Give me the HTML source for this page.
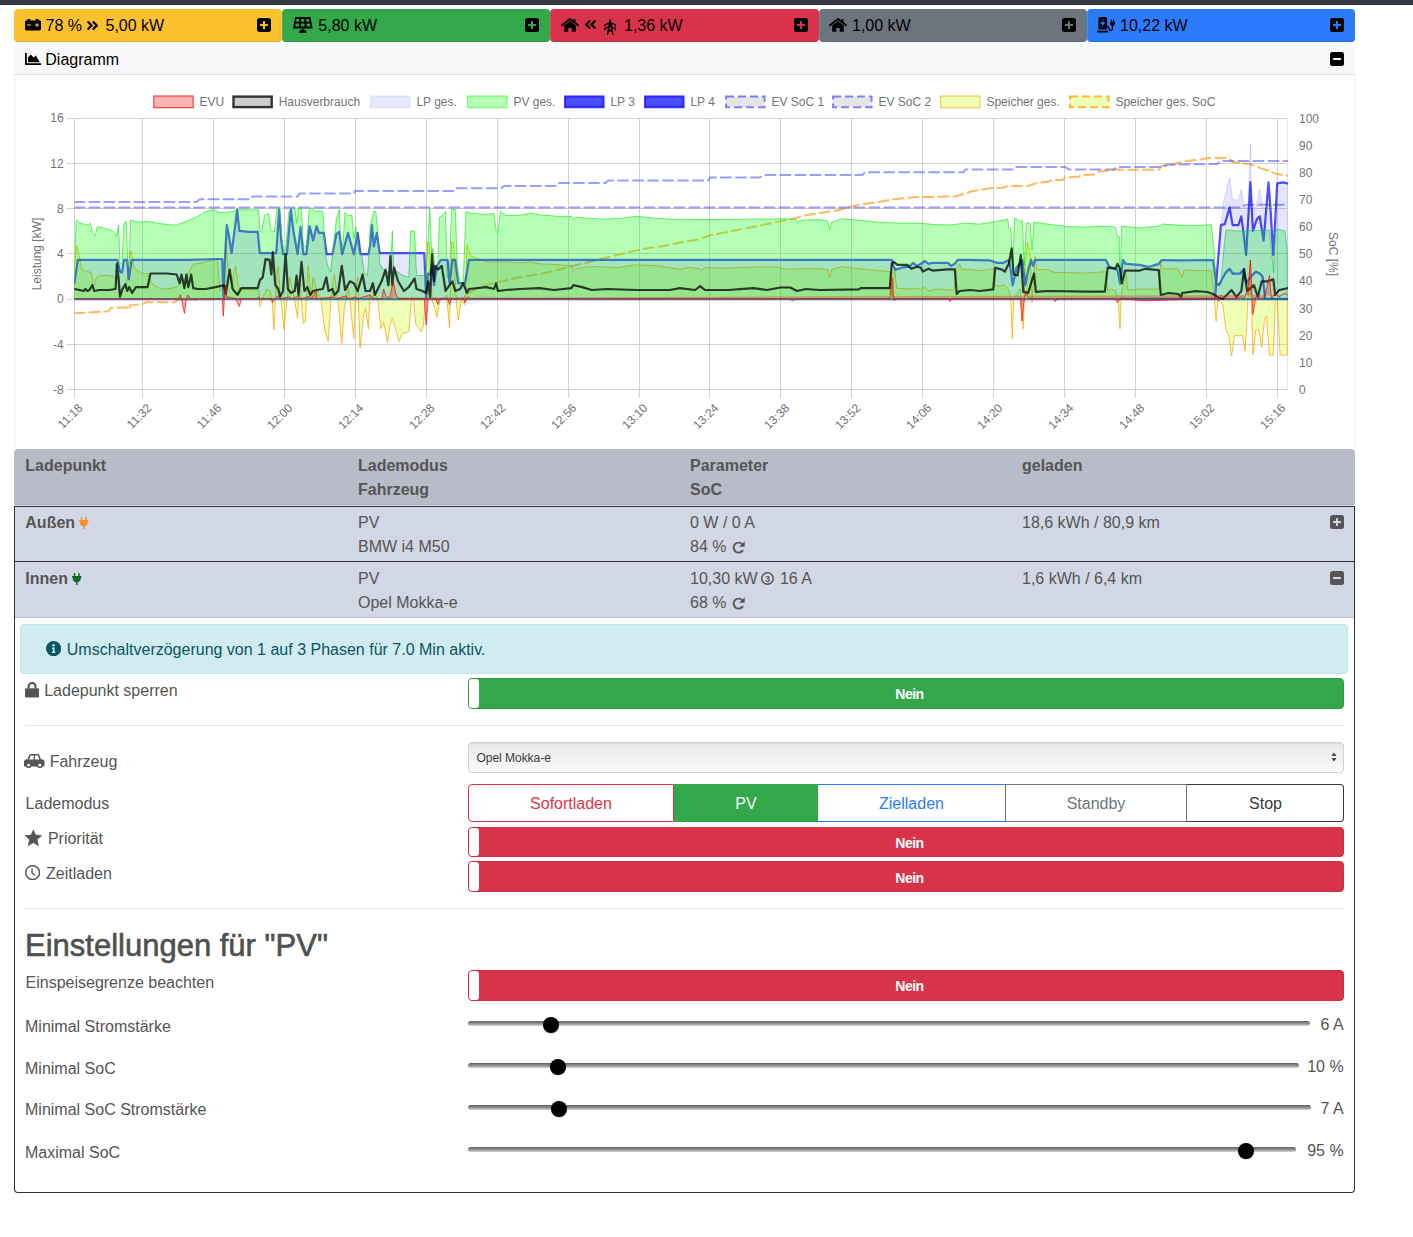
<!DOCTYPE html>
<html><head><meta charset="utf-8">
<style>
*{box-sizing:border-box;margin:0;padding:0}
html,body{width:1413px;height:1237px;overflow:hidden;background:#fff;font-family:"Liberation Sans",sans-serif;font-size:16px;color:#555}
.a{position:absolute}
.t{position:absolute;white-space:pre;line-height:1}
</style></head><body>
<div class="a" style="left:0px;top:0px;width:1413px;height:5px;background:#363a41"></div>
<div class="a" style="left:0px;top:4px;width:1413px;height:1px;background:#2c3036"></div>
<div class="a" style="left:14px;top:9px;width:268px;height:33px;background:#fbc12f;border-radius:4px;box-shadow:inset 0 -1px 0 rgba(0,0,0,0.1),inset 1px 0 0 rgba(255,255,255,0.12)"></div>
<svg class="a" style="left:257px;top:18px;" width="14" height="14" viewBox="0 0 14 14"><rect x="0" y="0" width="14" height="14" rx="2.5" fill="#000"/><rect x="3" y="6" width="8" height="2" rx="0.5" fill="#fbc12f"/><rect x="6" y="3" width="2" height="8" rx="0.5" fill="#fbc12f"/></svg>
<div class="a" style="left:282px;top:9px;width:268px;height:33px;background:#33a84a;border-radius:4px;box-shadow:inset 0 -1px 0 rgba(0,0,0,0.1),inset 1px 0 0 rgba(255,255,255,0.12)"></div>
<svg class="a" style="left:525px;top:18px;" width="14" height="14" viewBox="0 0 14 14"><rect x="0" y="0" width="14" height="14" rx="2.5" fill="#000"/><rect x="3" y="6" width="8" height="2" rx="0.5" fill="#33a84a"/><rect x="6" y="3" width="2" height="8" rx="0.5" fill="#33a84a"/></svg>
<div class="a" style="left:550px;top:9px;width:269px;height:33px;background:#d8334a;border-radius:4px;box-shadow:inset 0 -1px 0 rgba(0,0,0,0.1),inset 1px 0 0 rgba(255,255,255,0.12)"></div>
<svg class="a" style="left:794px;top:18px;" width="14" height="14" viewBox="0 0 14 14"><rect x="0" y="0" width="14" height="14" rx="2.5" fill="#000"/><rect x="3" y="6" width="8" height="2" rx="0.5" fill="#d8334a"/><rect x="6" y="3" width="2" height="8" rx="0.5" fill="#d8334a"/></svg>
<div class="a" style="left:819px;top:9px;width:268px;height:33px;background:#6c757d;border-radius:4px;box-shadow:inset 0 -1px 0 rgba(0,0,0,0.1),inset 1px 0 0 rgba(255,255,255,0.12)"></div>
<svg class="a" style="left:1062px;top:18px;" width="14" height="14" viewBox="0 0 14 14"><rect x="0" y="0" width="14" height="14" rx="2.5" fill="#000"/><rect x="3" y="6" width="8" height="2" rx="0.5" fill="#6c757d"/><rect x="6" y="3" width="2" height="8" rx="0.5" fill="#6c757d"/></svg>
<div class="a" style="left:1087px;top:9px;width:268px;height:33px;background:#2b7bfc;border-radius:4px;box-shadow:inset 0 -1px 0 rgba(0,0,0,0.1),inset 1px 0 0 rgba(255,255,255,0.12)"></div>
<svg class="a" style="left:1330px;top:18px;" width="14" height="14" viewBox="0 0 14 14"><rect x="0" y="0" width="14" height="14" rx="2.5" fill="#000"/><rect x="3" y="6" width="8" height="2" rx="0.5" fill="#2b7bfc"/><rect x="6" y="3" width="2" height="8" rx="0.5" fill="#2b7bfc"/></svg>
<svg class="a" style="left:24.5px;top:19.3px;" width="16" height="11.5" viewBox="0 0 16 11.5"><path d="M2.3 0h3v1.4h5.4V0h3v1.4h0.9A1.4 1.4 0 0 1 16 2.8v7.3a1.4 1.4 0 0 1-1.4 1.4H1.4A1.4 1.4 0 0 1 0 10.1V2.8a1.4 1.4 0 0 1 1.4-1.4h0.9z" fill="#000"/><rect x="2.2" y="5.4" width="3.6" height="1.2" fill="#fbc12f"/><rect x="10.2" y="5.4" width="3.6" height="1.2" fill="#fbc12f"/><rect x="11.4" y="4.2" width="1.2" height="3.6" fill="#fbc12f"/></svg>
<span class="t" style="left:45.5px;top:17.56px;font-size:16px;color:#000;">78 %</span>
<svg class="a" style="left:87px;top:20.6px;" width="12" height="9" viewBox="0 0 12 9"><path d="M1.4 1.2 L4.6 4.5 L1.4 7.8 M6.6 1.2 L9.8 4.5 L6.6 7.8" fill="none" stroke="#000" stroke-width="2.3" stroke-linecap="round" stroke-linejoin="round"/></svg>
<span class="t" style="left:105.5px;top:17.56px;font-size:16px;color:#000;">5,00 kW</span>
<svg class="a" style="left:293.1px;top:17px;" width="19.6" height="16" viewBox="0 0 19.6 16"><path d="M2.2 0 H17.4 L19.6 11.4 H0Z" fill="#000"/><path d="M3.5 1.9 H6.4 L6.2 4.8 H3Z M8.3 1.9 H11.3 L11.4 4.8 H8.2Z M13.2 1.9 H16.1 L16.6 4.8 H13.4Z M2.7 6.5 H6.1 L5.9 9.6 H2.2Z M8.1 6.5 H11.5 L11.6 9.6 H8Z M13.5 6.5 H16.9 L17.4 9.6 H13.7Z" fill="#33a84a"/><path d="M8.4 12.2 H11.2 L11.6 13.5 H13.3 V16 H6.3 V13.5 H8Z" fill="#000"/></svg>
<span class="t" style="left:318.3px;top:17.56px;font-size:16px;color:#000;">5,80 kW</span>
<svg class="a" style="left:561px;top:18px;" width="18" height="14" viewBox="0 0 18 14"><path d="M1 7.2 L9 1 L17 7.2" fill="none" stroke="#000" stroke-width="1.9" stroke-linecap="round" stroke-linejoin="round"/><rect x="12.6" y="1" width="1.8" height="3.5" fill="#000"/><path d="M3.2 7.4 L9 3 L14.8 7.4 V13.8 H10.7 V10 H7.3 V13.8 H3.2Z" fill="#000"/></svg>
<svg class="a" style="left:584px;top:20.3px;" width="12" height="9" viewBox="0 0 12 9"><path d="M10.6 1.2 L7.4 4.5 L10.6 7.8 M5.4 1.2 L2.2 4.5 L5.4 7.8" fill="none" stroke="#000" stroke-width="2.3" stroke-linecap="round" stroke-linejoin="round"/></svg>
<svg class="a" style="left:603.8px;top:18.9px;" width="12.4" height="16.6" viewBox="0 0 12.4 16.6"><g fill="none" stroke="#000" stroke-width="1.3" stroke-linecap="round"><path d="M6.2 0.5 L3.5 16.2 M6.2 0.5 L9 16.2 M0.8 6 Q6.2 2.2 11.6 6 M0.8 9.6 Q6.2 6 11.6 9.6 M4.3 4.5 L8 7.5 M8 4.5 L4.3 7.5 M4 10 L8.5 13 M8.5 10 L3.8 13"/></g><path d="M0.3 5.2 L1.8 7.8 L0.3 7.8Z M12.1 5.2 L10.6 7.8 L12.1 7.8Z M0.3 8.8 L1.8 11.5 L0.3 11.5Z M12.1 8.8 L10.6 11.5 L12.1 11.5Z" fill="#000"/></svg>
<span class="t" style="left:624px;top:17.56px;font-size:16px;color:#000;">1,36 kW</span>
<svg class="a" style="left:829px;top:18px;" width="18" height="14" viewBox="0 0 18 14"><path d="M1 7.2 L9 1 L17 7.2" fill="none" stroke="#000" stroke-width="1.9" stroke-linecap="round" stroke-linejoin="round"/><rect x="12.6" y="1" width="1.8" height="3.5" fill="#000"/><path d="M3.2 7.4 L9 3 L14.8 7.4 V13.8 H10.7 V10 H7.3 V13.8 H3.2Z" fill="#000"/></svg>
<span class="t" style="left:852px;top:17.56px;font-size:16px;color:#000;">1,00 kW</span>
<svg class="a" style="left:1097px;top:17px;" width="18" height="16" viewBox="0 0 18 16"><path d="M1.4 1.5 A1.5 1.5 0 0 1 2.9 0 H8.6 A1.5 1.5 0 0 1 10.1 1.5 V12.6 H1.4Z" fill="#000"/><rect x="0" y="13.8" width="11" height="1.6" rx="0.4" fill="#000"/><path d="M7 1.8 L3.2 7.1 H5.6 L4.3 11 L8.3 5.3 H5.9Z" fill="#2b7bfc"/><path d="M10.1 9.5 Q12 9.6 12.1 11.4 Q12.3 13.8 13.9 13.6 Q15.6 13.4 15.5 10.6 V8.6" fill="none" stroke="#000" stroke-width="1.3"/><path d="M13.2 4.8 H17.8 V6.6 Q17.8 9.2 15.5 9.2 Q13.2 9.2 13.2 6.6Z" fill="#000"/><rect x="13.9" y="2.5" width="1.1" height="2.6" fill="#000"/><rect x="16" y="2.5" width="1.1" height="2.6" fill="#000"/></svg>
<span class="t" style="left:1120px;top:17.56px;font-size:16px;color:#000;">10,22 kW</span>
<div class="a" style="left:14px;top:42px;width:1341px;height:406px;background:#fff;border-left:1px solid #f0f1f3;border-right:1px solid #f0f1f3"></div>
<div class="a" style="left:14px;top:42px;width:1341px;height:32px;background:#f7f8fa"></div>
<div class="a" style="left:14px;top:74px;width:1341px;height:1px;background:#dcdee2"></div>
<svg class="a" style="left:24.5px;top:53px;" width="16" height="12" viewBox="0 0 16 12"><path d="M0 0 H1.8 V10.2 H16 V12 H0Z" fill="#000"/><path d="M3 9.2 V4.6 L5.8 1.4 L8.6 4.6 L10.8 2.6 L14.8 9.2Z" fill="#000"/></svg>
<span class="t" style="left:45.3px;top:52.36px;font-size:16px;color:#000;">Diagramm</span>
<svg class="a" style="left:1330px;top:52px;" width="14" height="14" viewBox="0 0 14 14"><rect x="0" y="0" width="14" height="14" rx="2.5" fill="#000"/><rect x="3" y="6" width="8" height="2" rx="0.5" fill="#f7f8fa"/></svg>
<svg class="a" style="left:0;top:0" width="1413" height="450" viewBox="0 0 1413 450"><path d="M74.5 118.1 V397.6 M142.5 118.1 V397.6 M213.5 118.1 V397.6 M284.5 118.1 V397.6 M355.5 118.1 V397.6 M426.5 118.1 V397.6 M497.5 118.1 V397.6 M568.5 118.1 V397.6 M639.5 118.1 V397.6 M709.5 118.1 V397.6 M780.5 118.1 V397.6 M851.5 118.1 V397.6 M922.5 118.1 V397.6 M993.5 118.1 V397.6 M1064.5 118.1 V397.6 M1135.5 118.1 V397.6 M1206.5 118.1 V397.6 M1277.5 118.1 V397.6 M66.6 118.5 H1288 M66.6 163.5 H1288 M66.6 208.5 H1288 M66.6 253.5 H1288 M66.6 299.5 H1288 M66.6 344.5 H1288 M66.6 389.5 H1288" stroke="#d2d2d2" stroke-width="1" fill="none"/><path d="M1287.5 118 V390" stroke="#e6e6e6" stroke-width="1"/><g font-family="Liberation Sans" font-size="12" fill="#747474"><text x="63.6" y="122.3" text-anchor="end">16</text><text x="63.6" y="167.6" text-anchor="end">12</text><text x="63.6" y="212.8" text-anchor="end">8</text><text x="63.6" y="258.1" text-anchor="end">4</text><text x="63.6" y="303.4" text-anchor="end">0</text><text x="63.6" y="348.7" text-anchor="end">-4</text><text x="63.6" y="393.9" text-anchor="end">-8</text><text x="1299" y="122.5">100</text><text x="1299" y="149.6">90</text><text x="1299" y="176.8">80</text><text x="1299" y="203.9">70</text><text x="1299" y="231.1">60</text><text x="1299" y="258.2">50</text><text x="1299" y="285.4">40</text><text x="1299" y="312.5">30</text><text x="1299" y="339.7">20</text><text x="1299" y="366.8">10</text><text x="1299" y="394.0">0</text><text transform="translate(80.5 406) rotate(-45)" text-anchor="end" y="4">11:18</text><text transform="translate(149.5 406) rotate(-45)" text-anchor="end" y="4">11:32</text><text transform="translate(219.5 406) rotate(-45)" text-anchor="end" y="4">11:46</text><text transform="translate(290.5 406) rotate(-45)" text-anchor="end" y="4">12:00</text><text transform="translate(361.5 406) rotate(-45)" text-anchor="end" y="4">12:14</text><text transform="translate(432.5 406) rotate(-45)" text-anchor="end" y="4">12:28</text><text transform="translate(503.5 406) rotate(-45)" text-anchor="end" y="4">12:42</text><text transform="translate(574.5 406) rotate(-45)" text-anchor="end" y="4">12:56</text><text transform="translate(645.5 406) rotate(-45)" text-anchor="end" y="4">13:10</text><text transform="translate(716.5 406) rotate(-45)" text-anchor="end" y="4">13:24</text><text transform="translate(787.5 406) rotate(-45)" text-anchor="end" y="4">13:38</text><text transform="translate(858.5 406) rotate(-45)" text-anchor="end" y="4">13:52</text><text transform="translate(929.5 406) rotate(-45)" text-anchor="end" y="4">14:06</text><text transform="translate(1000.5 406) rotate(-45)" text-anchor="end" y="4">14:20</text><text transform="translate(1071.5 406) rotate(-45)" text-anchor="end" y="4">14:34</text><text transform="translate(1142.5 406) rotate(-45)" text-anchor="end" y="4">14:48</text><text transform="translate(1212.5 406) rotate(-45)" text-anchor="end" y="4">15:02</text><text transform="translate(1283.5 406) rotate(-45)" text-anchor="end" y="4">15:16</text><text transform="translate(41.3 254) rotate(-90)" text-anchor="middle">Leistung [kW]</text><text transform="translate(1328.5 254) rotate(90)" text-anchor="middle">SoC [%]</text></g><rect x="153.8" y="96.0" width="39.4" height="11.7" fill="rgba(255,10,13,0.3)" stroke="rgba(255,0,0,0.7)" stroke-width="1.2"/><text x="199.6" y="106.1" font-family="Liberation Sans" font-size="12" fill="#747474">EVU</text><rect x="233.5" y="96.6" width="38.2" height="10.5" fill="#cccccc" stroke="#333333" stroke-width="2.4"/><text x="278.7" y="106.1" font-family="Liberation Sans" font-size="12" fill="#747474">Hausverbrauch</text><rect x="370.6" y="96.0" width="39.4" height="11.7" fill="rgba(100,100,255,0.15)" stroke="rgba(120,120,255,0.15)" stroke-width="1.2"/><text x="416.4" y="106.1" font-family="Liberation Sans" font-size="12" fill="#747474">LP ges.</text><rect x="467.6" y="96.0" width="39.4" height="11.7" fill="rgba(10,255,13,0.3)" stroke="rgba(10,255,13,0.5)" stroke-width="1.2"/><text x="513.4" y="106.1" font-family="Liberation Sans" font-size="12" fill="#747474">PV ges.</text><rect x="565.0" y="96.4" width="38.6" height="10.9" fill="rgba(0,0,255,0.7)" stroke="rgba(0,0,255,0.7)" stroke-width="2"/><text x="610.4" y="106.1" font-family="Liberation Sans" font-size="12" fill="#747474">LP 3</text><rect x="645.0" y="96.4" width="38.6" height="10.9" fill="rgba(0,0,255,0.7)" stroke="rgba(0,0,255,0.7)" stroke-width="2"/><text x="690.4" y="106.1" font-family="Liberation Sans" font-size="12" fill="#747474">LP 4</text><rect x="726.0" y="96.4" width="38.6" height="10.9" fill="rgba(0,0,0,0.1)" stroke="rgba(50,50,255,0.6)" stroke-width="2" stroke-dasharray="8,4"/><text x="771.4" y="106.1" font-family="Liberation Sans" font-size="12" fill="#747474">EV SoC 1</text><rect x="833.0" y="96.4" width="38.6" height="10.9" fill="rgba(0,0,0,0.1)" stroke="rgba(50,50,255,0.6)" stroke-width="2" stroke-dasharray="8,4"/><text x="878.4" y="106.1" font-family="Liberation Sans" font-size="12" fill="#747474">EV SoC 2</text><rect x="940.6" y="96.0" width="39.4" height="11.7" fill="rgba(200,255,13,0.3)" stroke="rgba(255,165,0,0.6)" stroke-width="1.2"/><text x="986.4" y="106.1" font-family="Liberation Sans" font-size="12" fill="#747474">Speicher ges.</text><rect x="1070.0" y="96.4" width="38.6" height="10.9" fill="rgba(200,255,13,0.3)" stroke="rgba(255,165,0,0.8)" stroke-width="2" stroke-dasharray="8,4"/><text x="1115.4" y="106.1" font-family="Liberation Sans" font-size="12" fill="#747474">Speicher ges. SoC</text><defs><clipPath id="ca"><rect x="74.4" y="110" width="1213.6" height="280"/></clipPath></defs><g clip-path="url(#ca)" stroke-linejoin="round" stroke-linecap="round"><path d="M74.4 313.3 L108.8 311.3 L110.7 308.0 L128.2 307.5 L129.2 309.4 L130.1 305.5 L143.7 303.6 L145.6 302.2 L174.7 302.2 L178.6 299.7 L196.1 299.7 L225.2 298.7 L463.0 298.5 L470.0 292.0 L477.0 288.3 L488.9 284.1 L516.1 278.1 L544.9 273.0 L561.9 268.8 L578.9 264.5 L595.9 260.3 L612.9 256.1 L629.9 251.8 L646.8 248.4 L663.8 245.9 L680.8 242.5 L700.0 239.1 L708.8 235.7 L728.2 231.8 L747.6 227.9 L767.0 224.1 L786.4 220.2 L805.8 215.3 L820.0 213.0 L829.7 211.5 L839.4 209.9 L858.8 204.7 L878.2 202.1 L893.7 199.2 L917.0 196.9 L936.4 196.9 L955.8 196.3 L967.4 193.0 L970.0 191.7 L989.4 188.2 L1003.0 187.8 L1007.8 185.9 L1028.2 185.9 L1035.9 183.3 L1049.5 181.4 L1051.5 180.0 L1063.1 180.0 L1065.0 177.5 L1078.6 176.5 L1082.5 175.0 L1094.1 174.6 L1098.0 171.7 L1113.5 169.8 L1117.4 169.4 L1120.0 169.8 L1158.8 169.8 L1161.7 165.9 L1172.4 164.9 L1178.2 163.0 L1187.9 161.0 L1193.7 160.1 L1203.4 159.1 L1209.3 158.1 L1228.7 158.1 L1232.6 162.0 L1248.1 164.0 L1255.8 165.9 L1261.7 168.8 L1269.4 170.8 L1275.2 173.7 L1287.3 175.6" fill="none" stroke="rgba(255,160,30,0.72)" stroke-width="2" stroke-dasharray="10,5"/><path d="M74.4 265.8 L76.8 245.4 L79.7 258.0 L81.6 269.6 L87.5 271.6 L91.3 272.6 L93.3 287.1 L95.2 281.3 L97.2 276.4 L103.0 275.5 L108.8 275.5 L114.6 277.4 L117.5 277.4 L120.0 294.9 L126.2 285.2 L131.1 250.2 L134.0 267.7 L141.8 273.5 L147.6 273.5 L151.5 283.2 L159.2 288.1 L167.0 289.0 L176.7 287.1 L186.4 277.4 L192.2 265.8 L194.1 263.8 L198.0 263.8 L205.8 261.9 L217.4 259.0 L220.0 291.0 L223.9 285.2 L225.8 242.5 L227.8 265.8 L231.6 283.2 L235.5 265.8 L238.4 285.2 L239.4 289.0 L258.8 290.0 L259.8 306.5 L261.7 300.7 L266.5 289.0 L270.4 291.0 L272.4 304.6 L273.9 329.8 L276.2 281.3 L278.2 265.8 L280.1 291.0 L282.1 310.4 L284.0 329.8 L286.9 300.7 L289.8 277.4 L293.7 294.9 L297.6 318.1 L299.5 277.4 L303.4 323.9 L305.3 322.0 L308.2 265.8 L311.2 296.8 L313.1 277.4 L317.0 291.0 L320.9 298.7 L324.7 329.8 L328.2 341.4 L331.5 291.0 L334.4 273.5 L338.3 304.6 L341.8 343.3 L344.1 310.4 L348.0 285.2 L349.9 300.7 L353.8 338.5 L355.8 291.0 L357.7 277.4 L360.0 348.2 L363.5 316.2 L365.5 308.4 L368.4 328.8 L370.0 294.9 L372.9 300.7 L373.9 291.0 L377.8 298.7 L380.7 328.8 L383.6 322.0 L387.5 342.4 L389.4 327.8 L392.3 318.1 L395.2 327.8 L399.1 341.4 L402.0 333.6 L408.8 331.7 L411.7 296.8 L413.6 298.7 L415.6 323.9 L421.4 331.7 L423.3 325.9 L425.3 298.7 L427.2 242.5 L429.2 242.5 L432.1 300.7 L435.0 308.4 L436.9 317.2 L439.8 300.7 L443.7 298.7 L446.6 294.9 L449.5 327.8 L451.5 242.5 L453.4 242.5 L456.3 300.7 L458.2 320.1 L461.2 300.7 L465.0 304.6 L467.0 244.4 L470.9 256.1 L486.4 261.9 L505.8 261.9 L520.0 262.9 L529.7 261.9 L539.4 263.8 L558.8 264.8 L571.4 265.8 L573.3 271.6 L576.2 268.7 L587.9 266.7 L597.6 266.7 L617.0 267.7 L636.4 264.8 L655.8 265.8 L670.0 267.7 L679.7 269.3 L689.4 267.3 L699.1 268.7 L702.0 270.6 L703.9 267.7 L728.2 268.1 L767.0 266.7 L778.6 267.3 L786.4 269.3 L805.8 268.7 L820.0 268.7 L827.8 269.6 L829.7 277.4 L831.6 269.6 L841.3 266.7 L858.8 268.7 L878.2 270.6 L889.8 271.6 L892.1 298.7 L894.7 267.7 L896.6 288.1 L907.3 289.0 L917.0 288.1 L920.9 290.0 L924.7 287.1 L928.6 291.0 L936.4 289.0 L953.8 290.0 L956.7 269.6 L959.6 263.8 L961.6 269.6 L970.0 269.6 L979.7 270.6 L993.3 268.7 L995.2 285.2 L999.1 286.1 L1004.9 285.2 L1008.8 290.0 L1010.7 298.7 L1012.3 338.5 L1013.6 298.7 L1020.4 289.0 L1023.3 328.8 L1025.3 265.8 L1027.2 242.5 L1030.1 254.1 L1032.1 302.6 L1035.0 256.1 L1036.9 269.6 L1047.6 269.6 L1055.3 272.6 L1067.0 272.6 L1086.4 273.1 L1105.8 271.6 L1107.7 291.0 L1111.6 289.0 L1115.5 291.0 L1118.4 300.7 L1120.0 328.9 L1121.0 298.8 L1121.9 291.1 L1125.8 271.7 L1127.8 290.1 L1139.4 289.1 L1149.1 289.1 L1158.8 289.1 L1160.8 263.9 L1163.7 268.8 L1178.2 268.8 L1182.1 277.5 L1184.0 269.7 L1197.6 270.7 L1211.2 270.7 L1214.1 295.0 L1216.1 321.2 L1218.0 298.8 L1222.9 304.7 L1225.8 329.9 L1228.7 335.7 L1231.6 356.1 L1234.5 335.7 L1242.3 335.7 L1245.2 351.2 L1248.1 298.8 L1250.4 260.0 L1252.9 355.1 L1255.8 329.9 L1258.8 329.9 L1261.7 347.3 L1264.6 318.2 L1266.5 316.3 L1269.4 355.1 L1273.3 355.1 L1275.2 300.8 L1277.2 298.8 L1280.1 355.1 L1287.3 355.1 L1287.3 299.2 L74.4 299.2Z" fill="rgba(200,255,13,0.3)" stroke="rgba(255,165,0,0.75)" stroke-width="1"/><path d="M74.4 207.6 L225.2 207.6 L1120.0 207.6 L1240.3 207.6 L1246.1 204.7 L1285.0 204.7" fill="none" stroke="rgba(60,60,255,0.5)" stroke-width="2" stroke-dasharray="10,5"/><path d="M74.4 202.1 L196.1 202.1 L199.9 199.2 L220.0 199.2 L251.0 199.2 L252.0 196.5 L297.6 196.5 L299.5 193.6 L353.8 193.6 L354.8 191.1 L370.0 191.1 L453.4 191.1 L455.3 188.2 L501.9 188.2 L503.8 185.9 L520.0 185.9 L556.9 185.9 L558.8 182.9 L605.3 182.9 L608.2 180.4 L670.0 180.4 L708.8 180.4 L709.8 177.5 L759.2 177.5 L765.0 175.0 L820.0 175.0 L862.7 175.0 L864.6 172.3 L963.5 172.3 L965.5 169.4 L970.0 169.4 L1014.6 169.4 L1016.5 166.9 L1065.0 166.9 L1068.9 169.4 L1113.5 169.4 L1117.4 166.9 L1120.0 166.9 L1160.8 166.9 L1168.5 164.5 L1217.0 164.0 L1220.9 161.0 L1287.3 161.0" fill="none" stroke="rgba(60,60,255,0.5)" stroke-width="2" stroke-dasharray="10,5"/><path d="M74.4 299.2 H1288" stroke="rgba(0,0,255,0.7)" stroke-width="2" fill="none"/><path d="M1120.0 298.8 L1215.1 298.8 L1216.1 283.3 L1220.9 225.1 L1224.8 224.1 L1229.6 207.6 L1232.6 225.1 L1238.4 225.1 L1241.3 216.4 L1244.2 238.7 L1246.1 255.2 L1248.1 221.2 L1250.4 182.4 L1252.9 230.9 L1256.8 219.3 L1259.7 216.4 L1263.6 240.6 L1268.5 182.4 L1270.4 207.6 L1273.3 255.2 L1277.2 183.4 L1283.0 182.4 L1287.3 183.4" fill="none" stroke="rgba(0,0,255,0.7)" stroke-width="2.2"/><path d="M74.4 283.2 L77.8 259.9 L89.4 259.9 L117.5 259.9 L120.0 271.6 L122.0 272.6 L123.9 259.9 L127.2 259.9 L128.8 279.3 L131.7 259.9 L147.6 259.9 L186.4 259.9 L220.0 259.0 L222.3 259.0 L223.5 296.8 L224.8 261.9 L226.8 225.0 L228.7 234.7 L231.6 253.2 L234.5 230.9 L237.1 209.5 L239.4 230.9 L249.1 231.8 L257.8 231.8 L259.8 253.2 L276.2 253.2 L279.2 209.5 L281.1 238.6 L283.0 254.1 L286.9 254.1 L290.8 209.5 L293.7 232.8 L297.6 254.1 L300.5 227.0 L303.4 254.1 L306.3 254.1 L309.6 226.0 L313.1 240.6 L316.6 226.0 L318.9 232.8 L323.8 232.8 L326.7 254.1 L332.5 254.1 L336.4 233.8 L339.3 231.8 L342.2 254.1 L348.0 232.8 L353.8 254.1 L357.7 232.8 L360.6 254.1 L368.4 254.1 L370.0 246.4 L371.9 225.0 L373.9 246.4 L376.8 232.8 L379.7 253.2 L389.4 253.2 L408.8 253.2 L424.3 253.2 L426.2 298.7 L427.8 273.5 L430.1 274.5 L432.1 263.8 L434.0 285.2 L436.9 265.8 L440.8 259.9 L447.6 259.9 L449.5 283.2 L452.4 259.9 L455.3 259.9 L458.2 283.2 L465.0 283.2 L468.9 259.9 L520.0 259.9 L670.0 259.9 L820.0 259.9 L891.8 259.9 L893.7 266.7 L895.6 269.6 L901.5 267.7 L909.2 266.7 L913.1 262.9 L917.0 265.8 L920.9 263.8 L924.7 260.9 L928.6 263.8 L932.5 262.9 L948.0 262.9 L950.9 265.8 L954.8 263.8 L957.7 259.9 L970.0 259.9 L989.4 260.3 L997.2 262.9 L1003.0 262.9 L1008.8 259.9 L1010.7 269.6 L1012.7 285.2 L1016.5 267.7 L1019.5 263.8 L1022.4 259.9 L1025.3 285.2 L1028.2 269.6 L1031.1 259.9 L1033.0 265.8 L1035.0 259.9 L1105.8 259.9 L1109.6 266.7 L1117.4 269.6 L1120.0 283.3 L1122.9 260.0 L1125.8 263.9 L1139.4 264.9 L1149.1 266.8 L1158.8 263.9 L1161.7 260.0 L1178.2 260.4 L1213.1 260.0 L1216.1 283.3 L1219.0 285.2 L1222.9 277.5 L1225.8 272.6 L1229.6 268.8 L1232.6 273.6 L1240.3 273.6 L1243.2 269.7 L1246.1 283.3 L1250.0 277.5 L1255.8 271.7 L1259.7 273.6 L1262.6 276.5 L1265.2 298.8 L1287.3 298.8" fill="none" stroke="rgba(0,0,255,0.7)" stroke-width="2.2"/><path d="M74.4 269.6 L76.2 220.2 L79.7 223.1 L83.6 224.1 L88.4 225.0 L90.4 223.1 L92.3 231.8 L95.2 235.7 L97.2 227.0 L101.0 227.0 L105.9 228.9 L110.7 229.9 L114.6 232.8 L116.5 236.7 L118.5 225.0 L120.0 263.8 L122.0 263.8 L123.9 223.1 L126.2 221.2 L127.8 263.8 L129.2 263.8 L130.5 220.2 L137.9 222.1 L147.6 221.5 L157.3 223.1 L167.0 224.6 L176.7 225.0 L186.4 221.2 L196.1 217.3 L205.8 211.5 L213.5 209.5 L220.0 212.4 L227.8 212.4 L235.5 210.5 L239.4 209.5 L249.1 209.9 L258.8 209.9 L259.8 230.9 L261.7 231.8 L264.6 215.3 L268.5 213.4 L271.4 230.9 L274.3 231.8 L277.2 208.5 L279.2 207.6 L282.1 238.6 L284.0 254.1 L285.9 246.4 L288.9 211.5 L291.8 209.5 L294.7 207.6 L296.6 223.1 L298.5 207.6 L301.5 209.5 L303.4 246.4 L306.3 246.4 L309.2 209.5 L312.1 207.6 L315.0 211.5 L319.9 210.5 L322.8 211.5 L325.7 256.1 L327.6 265.8 L330.6 271.6 L332.5 254.1 L336.4 219.2 L339.3 209.5 L341.2 250.2 L343.2 240.6 L345.1 212.4 L348.0 215.3 L351.9 215.3 L353.8 238.6 L355.8 227.0 L357.7 244.4 L359.6 254.1 L361.6 254.1 L364.5 273.5 L367.4 275.5 L369.3 250.2 L370.0 227.0 L373.9 211.5 L375.8 211.5 L377.8 232.8 L379.7 263.8 L383.6 269.6 L389.4 273.5 L391.3 254.1 L392.3 230.9 L393.7 269.6 L397.2 271.6 L403.0 275.5 L408.8 277.4 L410.7 230.9 L414.6 230.9 L416.5 275.5 L424.3 275.5 L426.2 269.6 L428.2 236.7 L429.7 208.5 L431.7 254.1 L433.0 248.3 L435.0 269.6 L437.9 263.8 L439.4 217.3 L442.7 215.3 L445.6 211.5 L447.2 277.4 L449.5 269.6 L451.5 209.5 L455.3 209.5 L457.3 265.8 L460.2 283.2 L463.1 283.2 L466.0 211.5 L470.9 213.4 L486.4 214.4 L494.1 213.4 L496.1 230.9 L498.0 232.8 L500.3 211.5 L505.8 215.3 L520.0 215.3 L530.7 213.0 L539.4 214.9 L558.8 216.3 L571.4 216.3 L573.9 219.2 L576.2 217.3 L587.9 218.2 L603.4 219.2 L620.9 218.2 L636.4 216.3 L655.8 218.2 L670.0 219.2 L708.8 219.6 L747.6 219.2 L786.4 218.8 L796.1 219.6 L798.0 223.1 L799.9 220.2 L820.0 219.6 L827.8 221.2 L829.7 229.9 L831.6 222.1 L841.3 218.8 L858.8 220.2 L878.2 222.1 L897.6 223.1 L917.0 223.1 L936.4 224.6 L949.9 225.0 L965.5 223.1 L970.0 223.5 L979.7 224.1 L989.4 222.7 L1005.9 219.6 L1007.8 219.2 L1008.8 227.9 L1010.7 227.9 L1012.7 265.8 L1014.6 218.2 L1017.5 219.2 L1020.4 222.1 L1022.4 220.2 L1024.3 265.8 L1026.2 223.1 L1030.1 223.1 L1032.1 250.2 L1034.0 222.1 L1047.6 224.1 L1067.0 226.6 L1086.4 227.0 L1105.8 226.0 L1115.5 227.0 L1117.4 236.7 L1119.3 236.7 L1120.0 285.2 L1121.6 226.1 L1129.7 227.0 L1139.4 228.0 L1149.1 227.0 L1158.8 226.1 L1162.7 224.1 L1178.2 225.1 L1197.6 225.5 L1211.2 224.7 L1214.1 250.3 L1216.1 283.3 L1220.9 283.3 L1223.8 250.3 L1225.8 229.9 L1236.4 230.9 L1255.8 230.5 L1269.4 230.5 L1271.4 250.3 L1273.7 272.6 L1275.2 232.9 L1277.2 229.0 L1285.0 230.9 L1287.3 252.3 L1287.3 299.2 L74.4 299.2Z" fill="rgba(10,255,13,0.3)" stroke="rgba(10,230,13,0.6)" stroke-width="1"/><path d="M74.4 283.2 L77.8 259.9 L89.4 259.9 L117.5 259.9 L120.0 271.6 L122.0 272.6 L123.9 259.9 L127.2 259.9 L128.8 279.3 L131.7 259.9 L147.6 259.9 L186.4 259.9 L220.0 259.0 L222.3 259.0 L223.5 296.8 L224.8 261.9 L226.8 225.0 L228.7 234.7 L231.6 253.2 L234.5 230.9 L237.1 209.5 L239.4 230.9 L249.1 231.8 L257.8 231.8 L259.8 253.2 L276.2 253.2 L279.2 209.5 L281.1 238.6 L283.0 254.1 L286.9 254.1 L290.8 209.5 L293.7 232.8 L297.6 254.1 L300.5 227.0 L303.4 254.1 L306.3 254.1 L309.6 226.0 L313.1 240.6 L316.6 226.0 L318.9 232.8 L323.8 232.8 L326.7 254.1 L332.5 254.1 L336.4 233.8 L339.3 231.8 L342.2 254.1 L348.0 232.8 L353.8 254.1 L357.7 232.8 L360.6 254.1 L368.4 254.1 L370.0 246.4 L371.9 225.0 L373.9 246.4 L376.8 232.8 L379.7 253.2 L389.4 253.2 L408.8 253.2 L424.3 253.2 L426.2 298.7 L427.8 273.5 L430.1 274.5 L432.1 263.8 L434.0 285.2 L436.9 265.8 L440.8 259.9 L447.6 259.9 L449.5 283.2 L452.4 259.9 L455.3 259.9 L458.2 283.2 L465.0 283.2 L468.9 259.9 L520.0 259.9 L670.0 259.9 L820.0 259.9 L891.8 259.9 L893.7 266.7 L895.6 269.6 L901.5 267.7 L909.2 266.7 L913.1 262.9 L917.0 265.8 L920.9 263.8 L924.7 260.9 L928.6 263.8 L932.5 262.9 L948.0 262.9 L950.9 265.8 L954.8 263.8 L957.7 259.9 L970.0 259.9 L989.4 260.3 L997.2 262.9 L1003.0 262.9 L1008.8 259.9 L1010.7 269.6 L1012.7 285.2 L1016.5 267.7 L1019.5 263.8 L1022.4 259.9 L1025.3 285.2 L1028.2 269.6 L1031.1 259.9 L1033.0 265.8 L1035.0 259.9 L1105.8 259.9 L1109.6 266.7 L1117.4 269.6 L1120.0 283.3 L1122.9 260.0 L1125.8 263.9 L1139.4 264.9 L1149.1 266.8 L1158.8 263.9 L1161.7 260.0 L1178.2 260.4 L1213.1 260.0 L1215.1 298.8 L1216.1 283.3 L1220.9 225.1 L1223.8 199.9 L1229.6 177.5 L1232.6 199.9 L1238.4 199.9 L1241.3 189.2 L1244.2 207.6 L1248.1 207.6 L1250.4 143.6 L1252.0 207.6 L1255.8 207.6 L1259.7 189.2 L1262.6 207.6 L1267.5 207.6 L1268.5 182.4 L1270.4 207.6 L1273.3 255.2 L1277.2 183.4 L1283.0 182.4 L1287.3 183.4 L1287.3 299.2 L74.4 299.2Z" fill="rgba(0,0,255,0.1)" stroke="rgba(120,120,255,0.25)" stroke-width="1"/><path d="M74.4 289.0 L79.7 290.0 L83.6 291.0 L85.5 289.0 L87.5 291.0 L89.4 290.0 L92.3 285.2 L94.2 291.0 L99.1 290.0 L108.8 290.0 L115.6 289.0 L116.9 263.8 L118.5 277.4 L120.0 296.8 L122.4 289.0 L125.3 284.2 L127.2 291.0 L129.2 287.1 L132.1 292.9 L135.9 287.1 L147.6 287.1 L150.5 273.5 L157.3 273.5 L167.0 273.5 L176.7 274.5 L179.6 283.2 L181.5 274.5 L184.4 288.1 L186.4 274.5 L188.3 287.1 L191.2 274.5 L193.2 288.1 L198.0 289.0 L205.8 289.0 L215.5 287.1 L220.0 286.1 L223.9 285.2 L225.8 293.9 L229.7 269.6 L232.6 289.0 L237.5 294.9 L241.3 288.1 L249.1 288.1 L257.8 288.1 L259.8 280.3 L262.7 277.4 L265.6 259.0 L269.5 259.9 L271.4 274.5 L272.8 252.2 L275.3 285.2 L278.2 289.0 L280.1 296.8 L283.0 291.0 L285.6 254.1 L287.9 289.0 L290.8 292.9 L294.7 291.0 L296.6 275.5 L298.5 294.9 L301.5 261.9 L304.4 291.0 L307.3 287.1 L310.2 294.9 L313.1 291.0 L317.0 290.0 L322.8 289.0 L326.3 277.4 L328.6 291.0 L332.5 289.0 L334.4 294.9 L338.3 291.0 L341.8 265.8 L345.1 290.0 L349.9 281.3 L353.8 283.2 L357.7 291.0 L362.6 274.5 L365.5 291.0 L370.0 291.0 L372.9 283.2 L374.8 294.9 L377.8 289.0 L381.6 281.3 L385.5 269.6 L388.4 285.2 L390.4 256.1 L392.3 285.2 L394.2 267.7 L398.1 281.3 L403.9 291.0 L408.8 287.1 L414.6 278.4 L416.5 289.0 L422.4 291.0 L426.2 292.9 L428.2 281.3 L430.1 296.8 L432.1 254.1 L434.0 281.3 L435.0 265.8 L437.9 269.6 L441.8 265.8 L445.6 291.0 L449.5 285.2 L452.4 281.3 L455.3 291.0 L460.2 289.0 L463.1 283.2 L467.0 292.9 L468.9 289.0 L486.4 287.1 L494.1 289.0 L496.1 283.2 L498.0 291.0 L505.8 290.0 L520.0 289.0 L539.4 288.1 L553.9 290.0 L571.4 288.1 L573.3 285.2 L582.1 287.1 L591.8 290.0 L607.3 289.0 L636.4 290.0 L659.6 290.0 L670.0 290.0 L679.7 288.1 L695.2 290.0 L700.1 286.1 L704.9 290.0 L728.2 290.0 L753.4 288.1 L767.0 290.0 L780.6 287.5 L790.2 287.5 L797.0 291.0 L805.8 289.0 L820.0 290.0 L858.8 289.4 L860.7 288.1 L889.8 288.1 L891.8 263.8 L893.7 261.9 L897.6 264.8 L907.3 264.8 L911.2 268.7 L917.0 266.7 L920.9 267.7 L922.8 271.6 L928.6 268.7 L932.5 270.6 L948.0 269.3 L954.8 269.3 L956.7 293.9 L959.6 291.0 L970.0 290.0 L979.7 291.0 L993.3 289.4 L995.2 267.7 L1002.0 269.6 L1004.9 271.6 L1008.8 263.8 L1011.7 248.3 L1013.6 274.5 L1017.5 275.5 L1020.8 255.1 L1023.3 291.9 L1028.2 292.9 L1034.0 273.5 L1035.9 291.9 L1047.6 291.0 L1086.4 291.6 L1104.8 291.6 L1107.7 267.7 L1115.5 268.7 L1117.4 263.8 L1120.0 268.8 L1121.9 283.3 L1124.9 270.7 L1139.4 270.7 L1145.2 268.8 L1158.8 270.1 L1160.8 295.0 L1168.5 293.0 L1178.2 294.0 L1181.1 296.9 L1182.1 293.0 L1195.7 291.1 L1207.3 292.0 L1213.1 294.0 L1219.0 297.9 L1222.9 298.8 L1228.7 293.0 L1231.6 290.1 L1236.4 296.9 L1241.3 291.1 L1244.2 268.8 L1247.1 291.1 L1253.9 285.2 L1257.8 296.9 L1261.7 281.4 L1267.5 281.4 L1273.3 279.4 L1275.2 295.0 L1279.1 290.1 L1287.3 288.2" fill="none" stroke="rgba(0,0,0,0.75)" stroke-width="2.2"/><path d="M74.4 298.7 L178.6 298.7 L180.2 294.9 L181.5 298.7 L184.4 313.3 L186.4 298.7 L187.9 294.9 L190.2 298.7 L220.0 298.7 L222.3 298.7 L223.3 316.2 L224.3 298.7 L225.4 285.2 L226.8 296.8 L231.6 297.8 L235.5 298.7 L239.4 306.5 L241.3 298.7 L256.9 298.7 L258.8 296.8 L260.7 298.7 L271.4 298.7 L272.4 302.6 L274.3 298.7 L278.2 295.8 L280.1 298.7 L289.8 296.8 L291.8 298.7 L298.5 295.8 L300.5 298.7 L309.2 296.4 L311.2 298.7 L316.0 291.0 L317.0 298.7 L334.4 296.8 L336.4 298.7 L346.1 295.8 L348.0 298.7 L355.8 296.8 L357.7 298.7 L370.0 294.9 L373.9 298.7 L381.6 298.7 L383.6 289.0 L385.5 294.9 L389.4 298.7 L393.3 281.3 L396.2 294.9 L399.1 298.7 L424.3 298.7 L426.2 324.9 L428.2 298.7 L435.9 298.7 L437.9 304.6 L439.8 298.7 L447.6 298.7 L449.5 304.6 L451.5 298.7 L463.1 298.7 L465.0 302.6 L467.9 296.8 L469.9 298.7 L520.0 298.7 L670.0 298.7 L790.2 298.7 L792.6 301.1 L795.1 298.7 L820.0 298.7 L889.8 298.7 L892.1 277.4 L893.7 298.7 L894.7 300.7 L895.6 298.7 L948.0 298.7 L949.9 301.6 L951.9 298.7 L970.0 298.7 L1020.4 298.7 L1022.0 321.0 L1024.3 298.7 L1026.2 291.0 L1028.2 298.7 L1053.4 298.7 L1055.3 301.6 L1057.3 298.7 L1115.5 298.7 L1117.4 302.6 L1120.0 298.8 L1143.3 300.8 L1217.0 298.8 L1219.0 300.8 L1220.9 295.0 L1222.9 296.9 L1224.8 298.8 L1236.4 298.8 L1240.3 296.9 L1244.2 298.8 L1248.1 289.1 L1250.4 260.0 L1252.9 314.4 L1255.8 296.9 L1263.6 298.8 L1267.5 285.2 L1269.4 275.5 L1271.4 298.8 L1275.2 293.0 L1279.1 296.9 L1285.0 293.0 L1287.3 295.0" fill="rgba(255,10,13,0.3)" stroke="rgba(255,0,0,0.7)" stroke-width="1"/></g></svg>
<div class="a" style="left:14px;top:505px;width:1341px;height:1px;background:#e2e3e7"></div>
<div class="a" style="left:14px;top:449px;width:1341px;height:56px;background:#b8bcc9;border-radius:4px 4px 2px 2px;border-bottom:1px solid #a5a9b6"></div>
<div class="a" style="left:14px;top:506px;width:1341px;height:56px;background:#d1d7e5;border:1px solid #2d323a;border-bottom:none"></div>
<div class="a" style="left:14px;top:561px;width:1341px;height:1px;background:#2d323a"></div>
<div class="a" style="left:14px;top:562px;width:1341px;height:56px;background:#d1d7e5;border-bottom:1px solid #b9bfcc"></div>
<div class="a" style="left:14px;top:562px;width:1341px;height:631px;border:1px solid #2d323a;border-top:none;border-radius:0 0 4px 4px"></div>
<span class="t" style="left:25.3px;top:458.06px;font-size:16px;color:#555;font-weight:700;">Ladepunkt</span>
<span class="t" style="left:358px;top:458.06px;font-size:16px;color:#555;font-weight:700;">Lademodus</span>
<span class="t" style="left:358px;top:481.66px;font-size:16px;color:#555;font-weight:700;">Fahrzeug</span>
<span class="t" style="left:690px;top:458.06px;font-size:16px;color:#555;font-weight:700;">Parameter</span>
<span class="t" style="left:690px;top:481.66px;font-size:16px;color:#555;font-weight:700;">SoC</span>
<span class="t" style="left:1022px;top:458.06px;font-size:16px;color:#555;font-weight:700;">geladen</span>
<span class="t" style="left:25.3px;top:514.96px;font-size:16px;color:#555;font-weight:700;">Außen</span>
<span class="t" style="left:358px;top:514.96px;font-size:16px;color:#555;">PV</span>
<span class="t" style="left:358px;top:538.56px;font-size:16px;color:#555;">BMW i4 M50</span>
<span class="t" style="left:690px;top:514.96px;font-size:16px;color:#555;">0 W / 0 A</span>
<span class="t" style="left:690px;top:538.56px;font-size:16px;color:#555;">84 %</span>
<span class="t" style="left:1022px;top:514.96px;font-size:16px;color:#555;">18,6 kWh / 80,9 km</span>
<svg class="a" style="left:1330px;top:515px;" width="14" height="14" viewBox="0 0 14 14"><rect x="0" y="0" width="14" height="14" rx="2.5" fill="#555"/><rect x="3" y="6" width="8" height="2" rx="0.5" fill="#d1d7e5"/><rect x="6" y="3" width="2" height="8" rx="0.5" fill="#d1d7e5"/></svg>
<span class="t" style="left:25.3px;top:570.96px;font-size:16px;color:#555;font-weight:700;">Innen</span>
<span class="t" style="left:358px;top:570.96px;font-size:16px;color:#555;">PV</span>
<span class="t" style="left:358px;top:594.56px;font-size:16px;color:#555;">Opel Mokka-e</span>
<span class="t" style="left:690px;top:570.96px;font-size:16px;color:#555;">10,30 kW</span>
<span class="t" style="left:690px;top:594.56px;font-size:16px;color:#555;">68 %</span>
<span class="t" style="left:1022px;top:570.96px;font-size:16px;color:#555;">1,6 kWh / 6,4 km</span>
<svg class="a" style="left:1330px;top:571px;" width="14" height="14" viewBox="0 0 14 14"><rect x="0" y="0" width="14" height="14" rx="2.5" fill="#555"/><rect x="3" y="6" width="8" height="2" rx="0.5" fill="#d1d7e5"/></svg>
<svg class="a" style="left:79px;top:517.4px;" width="9.5" height="12" viewBox="0 0 9.5 12"><path d="M1.8 0.2 A0.7 0.7 0 0 1 3.2 0.2 V3 H6.3 V0.2 A0.7 0.7 0 0 1 7.7 0.2 V3 H9.5 V4.6 H8.7 V6 Q8.7 8.6 5.5 9.2 V12 H4 V9.2 Q0.8 8.6 0.8 6 V4.6 H0 V3 H1.8Z" fill="#fd8c2f"/></svg>
<svg class="a" style="left:72px;top:573.3px;" width="9.5" height="12" viewBox="0 0 9.5 12"><path d="M1.8 0.2 A0.7 0.7 0 0 1 3.2 0.2 V3 H6.3 V0.2 A0.7 0.7 0 0 1 7.7 0.2 V3 H9.5 V4.6 H8.7 V6 Q8.7 8.6 5.5 9.2 V12 H4 V9.2 Q0.8 8.6 0.8 6 V4.6 H0 V3 H1.8Z" fill="#0d6a1f"/></svg>
<svg class="a" style="left:732.3px;top:541px;" width="13" height="12.5" viewBox="0 0 13 12.5"><path d="M10.3 3.2 A5 5 0 1 0 11 9" fill="none" stroke="#555" stroke-width="1.9"/><path d="M12.7 0.2 V5.8 H7.1Z" fill="#555"/></svg>
<svg class="a" style="left:732.3px;top:597px;" width="13" height="12.5" viewBox="0 0 13 12.5"><path d="M10.3 3.2 A5 5 0 1 0 11 9" fill="none" stroke="#555" stroke-width="1.9"/><path d="M12.7 0.2 V5.8 H7.1Z" fill="#555"/></svg>
<svg class="a" style="left:761.4px;top:571.8px;" width="13" height="13" viewBox="0 0 13 13"><circle cx="6.5" cy="6.5" r="5.75" fill="none" stroke="#555" stroke-width="1.5"/><text x="6.6" y="9.6" font-size="8.6" font-weight="bold" text-anchor="middle" fill="#555" font-family="Liberation Sans">3</text></svg>
<span class="t" style="left:779.9px;top:570.96px;font-size:16px;color:#555;">16 A</span>
<div class="a" style="left:20px;top:624px;width:1328px;height:50px;background:#d1ecf1;border:1px solid #bee5eb;border-radius:4px"></div>
<svg class="a" style="left:46px;top:641.3px;" width="15.2" height="15.2" viewBox="0 0 15.2 15.2"><circle cx="7.6" cy="7.6" r="7.6" fill="#0c5460"/><circle cx="7.6" cy="4.3" r="1.3" fill="#d1ecf1"/><path d="M6 6.4 H8.5 V10.6 H9.3 V11.9 H6 V10.6 H6.8 V7.7 H6Z" fill="#d1ecf1"/></svg>
<span class="t" style="left:66.8px;top:642.36px;font-size:16px;color:#0c5460;">Umschaltverzögerung von 1 auf 3 Phasen für 7.0 Min aktiv.</span>
<svg class="a" style="left:24.7px;top:682px;" width="14.2" height="15.6" viewBox="0 0 14.2 15.6"><path d="M3.6 6.5 V4.4 A3.5 3.5 0 0 1 10.6 4.4 V6.5" fill="none" stroke="#555" stroke-width="2.1"/><rect x="0" y="6.3" width="14.2" height="9.3" rx="1.4" fill="#555"/></svg>
<span class="t" style="left:44.2px;top:683.06px;font-size:16px;color:#555;">Ladepunkt sperren</span>
<div class="a" style="left:468px;top:678px;width:876px;height:31px;background:#33a84a;border:1px solid #2a9d45;border-radius:4px"></div>
<div class="a" style="left:469px;top:679px;width:10px;height:29px;background:#fff;border-radius:3px"></div>
<span class="t" style="left:859.5px;width:100px;text-align:center;top:687.45px;font-size:14px;color:#fff;font-weight:700;letter-spacing:-0.5px;">Nein</span>
<div class="a" style="left:25px;top:725px;width:1319px;height:1px;background:#e5e5e5"></div>
<svg class="a" style="left:24.4px;top:753.8px;" width="20.6" height="14.2" viewBox="0 0 20.6 14.2"><path d="M3.4 5.5 L5 1.4 A2.2 2.2 0 0 1 7 0 H13.5 A2.2 2.2 0 0 1 15.5 1.4 L17.1 5.5 A2.6 2.6 0 0 1 20.5 8 V11.5 A1 1 0 0 1 19.5 12.5 H0.9 A0.9 0.9 0 0 1 0 11.5 V8 A2.6 2.6 0 0 1 3.4 5.5Z" fill="#555"/><path d="M5.2 5.5 L6.4 2 Q6.6 1.5 7.2 1.5 H9.6 V5.5Z M10.9 5.5 V1.5 H13.3 Q13.9 1.5 14.1 2 L15.3 5.5Z" fill="#fff"/><circle cx="4.6" cy="11.2" r="2.9" fill="#555"/><circle cx="15.9" cy="11.2" r="2.9" fill="#555"/><circle cx="4.6" cy="11.2" r="1.4" fill="#fff"/><circle cx="15.9" cy="11.2" r="1.4" fill="#fff"/></svg>
<span class="t" style="left:49.7px;top:753.96px;font-size:16px;color:#555;">Fahrzeug</span>
<div class="a" style="left:468px;top:742px;width:876px;height:31px;background:linear-gradient(#e9e9e9,#f2f2f2 55%,#fafafa);border:1px solid #cdd2d8;border-radius:4px;box-shadow:inset 0 1px 1px rgba(0,0,0,.05)"></div>
<span class="t" style="left:476.5px;top:751.54px;font-size:12px;color:#3a3a3a;letter-spacing:-0.03px;">Opel Mokka-e</span>
<svg class="a" style="left:1331px;top:752px;" width="6" height="10" viewBox="0 0 6 10"><path d="M3 0.5 L5.6 4 H0.4Z M3 9.5 L5.6 6 H0.4Z" fill="#444"/></svg>
<span class="t" style="left:25.6px;top:796.06px;font-size:16px;color:#555;">Lademodus</span>
<div class="a" style="left:468px;top:784px;width:206px;height:38px;background:#fff;border:1px solid #dc3545;border-radius:4px 0 0 4px"></div>
<div class="a" style="left:674px;top:784px;width:144px;height:38px;background:#33a84a"></div>
<div class="a" style="left:818px;top:784px;width:188px;height:38px;background:#fff;border:1px solid #2b7bfc;border-left:none"></div>
<div class="a" style="left:1005px;top:784px;width:182px;height:38px;background:#fff;border:1px solid #6c757d"></div>
<div class="a" style="left:1187px;top:784px;width:157px;height:38px;background:#fff;border:1px solid #343a40;border-left:none;border-radius:0 4px 4px 0"></div>
<span class="t" style="left:421.0px;width:300px;text-align:center;top:795.66px;font-size:16px;color:#dc3545;">Sofortladen</span>
<span class="t" style="left:596.0px;width:300px;text-align:center;top:795.66px;font-size:16px;color:#fff;">PV</span>
<span class="t" style="left:761.5px;width:300px;text-align:center;top:795.66px;font-size:16px;color:#2b7bfc;">Zielladen</span>
<span class="t" style="left:946.0px;width:300px;text-align:center;top:795.66px;font-size:16px;color:#6c757d;">Standby</span>
<span class="t" style="left:1115.5px;width:300px;text-align:center;top:795.66px;font-size:16px;color:#343a40;">Stop</span>
<svg class="a" style="left:25.3px;top:830px;" width="16.7" height="15.8" viewBox="0 0 16.7 15.8"><path d="M8.35 0 L10.6 5 L16.7 5.6 L12.1 9.5 L13.5 15.8 L8.35 12.6 L3.2 15.8 L4.6 9.5 L0 5.6 L6.1 5Z" fill="#555" stroke="#555" stroke-width="0.6" stroke-linejoin="round"/></svg>
<span class="t" style="left:47.9px;top:831.16px;font-size:16px;color:#555;">Priorität</span>
<div class="a" style="left:468px;top:826.5px;width:876px;height:30.5px;background:#d8334a;border:1px solid #cf2e43;border-radius:4px"></div>
<div class="a" style="left:469px;top:827.5px;width:10px;height:28.5px;background:#fff;border-radius:3px"></div>
<span class="t" style="left:859.5px;width:100px;text-align:center;top:835.95px;font-size:14px;color:#fff;font-weight:700;letter-spacing:-0.5px;">Nein</span>
<svg class="a" style="left:25px;top:865.2px;" width="15.3" height="15.3" viewBox="0 0 15.3 15.3"><circle cx="7.65" cy="7.65" r="6.9" fill="none" stroke="#555" stroke-width="1.4"/><path d="M7.1 3.6 V8.2 L10 10.3" fill="none" stroke="#555" stroke-width="1.4"/></svg>
<span class="t" style="left:46.1px;top:865.76px;font-size:16px;color:#555;">Zeitladen</span>
<div class="a" style="left:468px;top:861.2px;width:876px;height:30.8px;background:#d8334a;border:1px solid #cf2e43;border-radius:4px"></div>
<div class="a" style="left:469px;top:862.2px;width:10px;height:28.8px;background:#fff;border-radius:3px"></div>
<span class="t" style="left:859.5px;width:100px;text-align:center;top:870.65px;font-size:14px;color:#fff;font-weight:700;letter-spacing:-0.5px;">Nein</span>
<div class="a" style="left:25px;top:908px;width:1319px;height:1px;background:#e5e5e5"></div>
<span class="t" style="left:25px;top:929.96px;font-size:31px;color:#505050;-webkit-text-stroke:0.6px #505050;">Einstellungen für "PV"</span>
<span class="t" style="left:25.5px;top:974.86px;font-size:16px;color:#555;">Einspeisegrenze beachten</span>
<div class="a" style="left:468px;top:970px;width:876px;height:31.3px;background:#d8334a;border:1px solid #cf2e43;border-radius:4px"></div>
<div class="a" style="left:469px;top:971px;width:10px;height:29.3px;background:#fff;border-radius:3px"></div>
<span class="t" style="left:859.5px;width:100px;text-align:center;top:979.45px;font-size:14px;color:#fff;font-weight:700;letter-spacing:-0.5px;">Nein</span>
<span class="t" style="left:25px;top:1018.56px;font-size:16px;color:#555;">Minimal Stromstärke</span>
<div class="a" style="left:468px;top:1021.2px;width:842px;height:5px;background:linear-gradient(#5e5e5e,#9a9a9a 60%,#d8d8d8);border-radius:2.5px"></div>
<div class="a" style="left:542.9px;top:1016.8px;width:16px;height:16px;background:#000;border-radius:50%;box-shadow:0 0.5px 1px rgba(0,0,0,.3)"></div>
<span class="t" style="right:69.40000000000009px;top:1017.16px;font-size:16px;color:#555;">6 A</span>
<span class="t" style="left:25px;top:1060.56px;font-size:16px;color:#555;">Minimal SoC</span>
<div class="a" style="left:468px;top:1063.3px;width:830.7px;height:5px;background:linear-gradient(#5e5e5e,#9a9a9a 60%,#d8d8d8);border-radius:2.5px"></div>
<div class="a" style="left:550px;top:1058.8999999999999px;width:16px;height:16px;background:#000;border-radius:50%;box-shadow:0 0.5px 1px rgba(0,0,0,.3)"></div>
<span class="t" style="right:69.40000000000009px;top:1058.76px;font-size:16px;color:#555;">10 %</span>
<span class="t" style="left:25px;top:1102.16px;font-size:16px;color:#555;">Minimal SoC Stromstärke</span>
<div class="a" style="left:468px;top:1105.2px;width:842.8px;height:5px;background:linear-gradient(#5e5e5e,#9a9a9a 60%,#d8d8d8);border-radius:2.5px"></div>
<div class="a" style="left:550.9px;top:1100.8px;width:16px;height:16px;background:#000;border-radius:50%;box-shadow:0 0.5px 1px rgba(0,0,0,.3)"></div>
<span class="t" style="right:69.40000000000009px;top:1101.16px;font-size:16px;color:#555;">7 A</span>
<span class="t" style="left:25px;top:1144.66px;font-size:16px;color:#555;">Maximal SoC</span>
<div class="a" style="left:468px;top:1147px;width:827.7px;height:5px;background:linear-gradient(#5e5e5e,#9a9a9a 60%,#d8d8d8);border-radius:2.5px"></div>
<div class="a" style="left:1238.1px;top:1142.6px;width:16px;height:16px;background:#000;border-radius:50%;box-shadow:0 0.5px 1px rgba(0,0,0,.3)"></div>
<span class="t" style="right:69.40000000000009px;top:1143.16px;font-size:16px;color:#555;">95 %</span>
</body></html>
